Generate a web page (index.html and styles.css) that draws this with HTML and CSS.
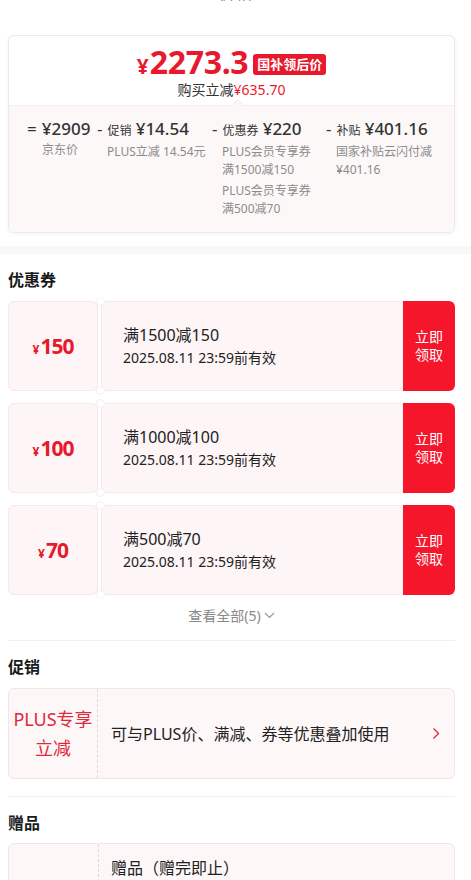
FILE: index.html
```html
<!DOCTYPE html>
<html lang="zh-CN">
<head>
    <meta charset="UTF-8">
    <title>价格</title>
    <link rel="stylesheet" href="styles.css">
</head>
<body>
    <div class="topbar"><div class="topbar-title">价格</div></div>

    <div class="wrap">
        <div class="price-card">
            <div class="price-main">
                <div class="price-line">
                    <span class="price-yen">¥</span><span class="price-num">2273.3</span><span class="price-tag">国补领后价</span>
                </div>
                <div class="price-sub">购买立减<span class="red">¥635.70</span></div>
            </div>
            <div class="price-detail">
                <div class="calc">
                    <div class="calc-head"><span class="op">=</span><span class="val">¥2909</span></div>
                    <div class="note">京东价</div>
                </div>
                <div class="calc">
                    <div class="calc-head"><span class="op">-</span><span class="lbl">促销</span> <span class="val">¥14.54</span></div>
                    <div class="note">PLUS立减 14.54元</div>
                </div>
                <div class="calc">
                    <div class="calc-head"><span class="op">-</span><span class="lbl">优惠券</span> <span class="val">¥220</span></div>
                    <div class="note">PLUS会员专享券<br>满1500减150</div>
                    <div class="note note-next">PLUS会员专享券<br>满500减70</div>
                </div>
                <div class="calc">
                    <div class="calc-head"><span class="op">-</span><span class="lbl">补贴</span> <span class="val">¥401.16</span></div>
                    <div class="note">国家补贴云闪付减<br>¥401.16</div>
                </div>
            </div>
        </div>
    </div>

    <div class="band"></div>

    <div class="wrap">
        <div class="section">
            <div class="sec-title">优惠券</div>
            <div class="coupons">
                <div class="coupon">
                    <div class="stub"><span class="stub-yen">¥</span>150</div>
                    <div class="coupon-main">
                        <div class="coupon-title">满1500减150</div>
                        <div class="coupon-date">2025.08.11 23:59前有效</div>
                    </div>
                    <div class="coupon-btn">立即<br>领取</div>
                </div>
                <div class="coupon">
                    <div class="stub"><span class="stub-yen">¥</span>100</div>
                    <div class="coupon-main">
                        <div class="coupon-title">满1000减100</div>
                        <div class="coupon-date">2025.08.11 23:59前有效</div>
                    </div>
                    <div class="coupon-btn">立即<br>领取</div>
                </div>
                <div class="coupon">
                    <div class="stub"><span class="stub-yen">¥</span>70</div>
                    <div class="coupon-main">
                        <div class="coupon-title">满500减70</div>
                        <div class="coupon-date">2025.08.11 23:59前有效</div>
                    </div>
                    <div class="coupon-btn">立即<br>领取</div>
                </div>
            </div>
            <div class="more">查看全部(5)<svg class="more-icon" width="11" height="7" viewBox="0 0 11 7"><polyline points="1,1 5.5,5.5 10,1" fill="none" stroke="#999" stroke-width="1.2"/></svg></div>
        </div>

        <div class="section section-promo">
            <div class="sec-title">促销</div>
            <div class="promo-card">
                <div class="promo-left">PLUS专享<br>立减</div>
                <div class="promo-text">可与PLUS价、满减、券等优惠叠加使用</div>
                <svg class="promo-arrow" width="8" height="13" viewBox="0 0 8 13"><polyline points="1.5,1.5 6.5,6.5 1.5,11.5" fill="none" stroke="#e0283b" stroke-width="1.3"/></svg>
            </div>
        </div>

        <div class="section section-last">
            <div class="sec-title sec-title-tight">赠品</div>
            <div class="gift-card">
                <div class="gift-left"></div>
                <div class="gift-text">赠品（赠完即止）</div>
            </div>
        </div>
    </div>
</body>
</html>
```

FILE: styles.css
```css
* {
    box-sizing: border-box;
}
body {
    margin: 0;
    background: #fff;
    color: #222;
    font-family: "Noto Sans", "Noto Sans CJK SC", sans-serif;
}
.topbar {
    height: 35px;
    overflow: hidden;
    text-align: center;
}
.topbar-title {
    margin-top: -19px;
    font-size: 17px;
    line-height: 24px;
    color: #666;
}
.wrap {
    padding: 0 16px 0 8px;
}
.red {
    color: #e8192c;
}

/* price card */
.price-card {
    border: 1px solid #f1e6e8;
    border-radius: 6px;
    box-shadow: 0 1px 4px rgba(0, 0, 0, 0.05);
    overflow: hidden;
}
.price-main {
    padding: 9px 0 5px;
    text-align: center;
}
.price-line {
    display: flex;
    justify-content: center;
    align-items: baseline;
    height: 34px;
    line-height: 34px;
    color: #e8192c;
    font-weight: bold;
}
.price-yen {
    font-size: 21px;
    margin-right: 1px;
}
.price-num {
    font-size: 32px;
    letter-spacing: -0.3px;
}
.price-tag {
    align-self: center;
    margin: 4px 0 0 5px;
    padding: 0 4px;
    height: 21px;
    line-height: 21px;
    font-size: 13px;
    color: #fff;
    background: #e8192c;
    border-radius: 3px;
}
.price-sub {
    margin-top: 1px;
    font-size: 14px;
    line-height: 20px;
    color: #333;
}
.price-detail {
    position: relative;
    display: grid;
    grid-template-columns: 70px 115px 114px 1fr;
    padding: 11px 0 14px 18px;
    background: #fdf8f8;
    border-top: 1px solid #f6ecec;
}
.price-detail::before {
    content: "";
    position: absolute;
    top: -5px;
    left: 224px;
    width: 8px;
    height: 8px;
    background: #fdf8f8;
    border-top: 1px solid #f6ecec;
    border-left: 1px solid #f6ecec;
    transform: rotate(45deg);
}
.calc-head {
    line-height: 24px;
    white-space: nowrap;
    color: #333;
}
.op {
    font-size: 17px;
    margin-right: 5px;
}
.lbl {
    font-size: 12px;
}
.val {
    font-size: 17px;
    font-weight: 500;
}
.note {
    padding-left: 15px;
    font-size: 12px;
    line-height: 18px;
    color: #8c8c8c;
    white-space: nowrap;
}
.calc:not(:first-child) .note {
    padding-left: 10px;
}
.note-next {
    margin-top: 3px;
}

.band {
    height: 8px;
    margin-top: 13px;
    background: #f6f7f9;
}

/* sections */
.section {
    border-bottom: 1px solid #f0f0f0;
}
.section-promo {
    padding-bottom: 17px;
}
.section-last {
    border-bottom: none;
}
.sec-title {
    padding: 15px 0 10px;
    font-size: 16px;
    line-height: 22px;
    font-weight: bold;
    color: #1a1a1a;
}
.sec-title-tight {
    padding-bottom: 9px;
}

/* coupons */
.coupons {
    display: flex;
    flex-direction: column;
    gap: 12px;
}
.coupon {
    position: relative;
    display: flex;
    height: 90px;
}
.coupon::before,
.coupon::after {
    content: "";
    position: absolute;
    left: 88px;
    width: 7px;
    height: 7px;
    background: #fff;
    border: 1px solid #f8eef0;
    border-radius: 50%;
}
.coupon::before {
    top: -4px;
}
.coupon::after {
    bottom: -4px;
}
.stub {
    display: flex;
    justify-content: center;
    align-items: baseline;
    padding-top: 29px;
    width: 90px;
    background: #fdf5f6;
    border: 1px solid #f5e7ea;
    border-radius: 6px;
    font-size: 21px;
    line-height: 30px;
    font-weight: bold;
    letter-spacing: -1px;
    color: #e8192c;
}
.stub-yen {
    font-size: 12px;
    margin-right: 1px;
    letter-spacing: 0;
}
.coupon-main {
    flex: 1;
    display: flex;
    flex-direction: column;
    justify-content: center;
    margin-left: 3px;
    padding: 0 0 1px 21px;
    background: #fdf5f6;
    border: 1px solid #f5e7ea;
    border-right: none;
    border-radius: 6px 0 0 6px;
}
.coupon-title {
    font-size: 16px;
    line-height: 24px;
    color: #222;
}
.coupon-date {
    font-size: 14px;
    line-height: 22px;
    color: #222;
}
.coupon-btn {
    display: flex;
    align-items: center;
    justify-content: center;
    width: 52px;
    background: #f5162b;
    color: #fff;
    font-size: 14px;
    line-height: 18px;
    text-align: center;
    border-radius: 0 6px 6px 0;
}
.more {
    padding: 11px 0 14px;
    text-align: center;
    font-size: 14px;
    line-height: 20px;
    color: #888;
}
.more-icon {
    margin-left: 3px;
    vertical-align: 2px;
}

/* promo + gift */
.promo-card,
.gift-card {
    display: flex;
    align-items: stretch;
    background: #fdf7f8;
    border: 1px solid #f5e3e6;
    border-radius: 6px;
}
.promo-card {
    height: 91px;
    align-items: center;
}
.promo-left {
    display: flex;
    align-items: center;
    justify-content: center;
    align-self: stretch;
    width: 89px;
    border-right: 1px dashed #efd3d8;
    color: #e0283b;
    font-size: 18px;
    line-height: 29px;
    text-align: center;
}
.promo-text {
    flex: 1;
    padding-left: 13px;
    font-size: 16px;
    line-height: 24px;
    color: #222;
}
.promo-arrow {
    margin-right: 14px;
}
.gift-card {
    height: 100px;
}
.gift-left {
    width: 90px;
    border-right: 1px dashed #efd3d8;
}
.gift-text {
    padding: 12px 0 0 12px;
    font-size: 16px;
    line-height: 24px;
    color: #222;
}
```
